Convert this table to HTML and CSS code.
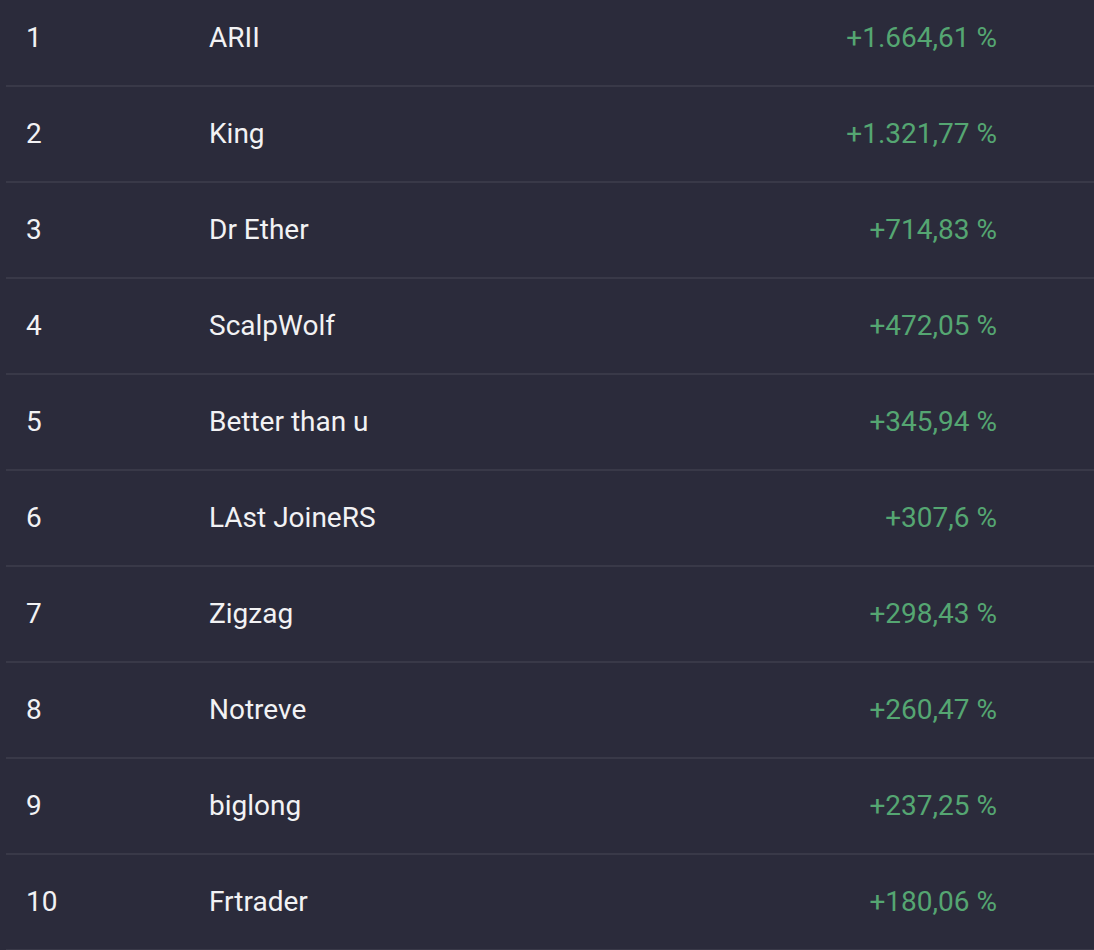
FILE: index.html
```html
<!DOCTYPE html>
<html lang="en">
<head>
  <meta charset="UTF-8" />
  <meta name="viewport" content="width=device-width, initial-scale=1.0"/>
  <title>Leaderboard</title>
  <link rel="stylesheet" href="styles.css">
</head>
<body>

<!-- Leaderboard rows -->
<section class="board">
  <div class="row"><span class="rank">1</span><span class="name">ARII</span><span class="gain">+1.664,61 %</span></div>
  <div class="row"><span class="rank">2</span><span class="name">King</span><span class="gain">+1.321,77 %</span></div>
  <div class="row"><span class="rank">3</span><span class="name">Dr Ether</span><span class="gain">+714,83 %</span></div>
  <div class="row"><span class="rank">4</span><span class="name">ScalpWolf</span><span class="gain">+472,05 %</span></div>
  <div class="row"><span class="rank">5</span><span class="name">Better than u</span><span class="gain">+345,94 %</span></div>
  <div class="row"><span class="rank">6</span><span class="name">LAst JoineRS</span><span class="gain">+307,6 %</span></div>
  <div class="row"><span class="rank">7</span><span class="name">Zigzag</span><span class="gain">+298,43 %</span></div>
  <div class="row"><span class="rank">8</span><span class="name">Notreve</span><span class="gain">+260,47 %</span></div>
  <div class="row"><span class="rank">9</span><span class="name">biglong</span><span class="gain">+237,25 %</span></div>
  <div class="row"><span class="rank">10</span><span class="name">Frtrader</span><span class="gain">+180,06 %</span></div>
</section>

</body>
</html>
```

FILE: styles.css
```css
html, body {
  height: 100%;
}
body {
  margin: 0;
  font-family: Roboto, 'Noto Sans', sans-serif;
  background-color: #2b2b3b;
  color: #f2f2f4;
  overflow: hidden;
}
.board {
  margin: -9px 0 0 6px;
}
.row {
  display: flex;
  align-items: center;
  box-sizing: border-box;
  height: 96px;
  padding: 0 97px 2px 20px;
  border-bottom: 2px solid #393948;
  font-size: 28px;
}
.rank {
  width: 183px;
  flex: none;
}
.name {
  flex: 1;
}
.gain {
  color: #55a672;
  text-align: right;
}
```
